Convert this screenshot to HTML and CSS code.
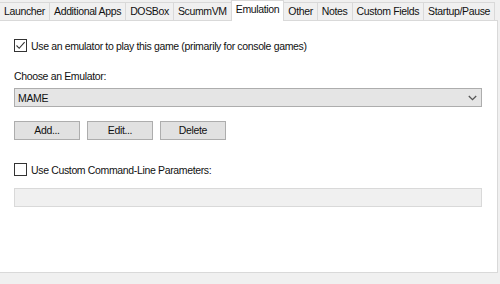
FILE: index.html
```html
<!DOCTYPE html>
<html>
<head>
<meta charset="utf-8">
<link rel="stylesheet" href="styles.css">
</head>
<body>
<div class="tabs">
  <div class="tab">Launcher</div>
  <div class="tab">Additional Apps</div>
  <div class="tab">DOSBox</div>
  <div class="tab">ScummVM</div>
  <div class="tab active">Emulation</div>
  <div class="tab">Other</div>
  <div class="tab">Notes</div>
  <div class="tab">Custom Fields</div>
  <div class="tab">Startup/Pause</div>
</div>
<div class="panel">
  <label class="check first">
    <span class="box"><svg width="11" height="11" viewBox="0 0 11 11"><path d="M1.5 5.5 L4.2 8.3 L9.6 2.2" fill="none" stroke="#333" stroke-width="1.1"/></svg></span>
    <span>Use an emulator to play this game (primarily for console games)</span>
  </label>
  <div class="label">Choose an Emulator:</div>
  <div class="select">
    <span>MAME</span>
    <svg class="chev" width="9" height="6" viewBox="0 0 9 6"><path d="M0.8 1 L4.5 4.6 L8.2 1" fill="none" stroke="#555" stroke-width="1.3"/></svg>
  </div>
  <div class="buttons">
    <div class="btn">Add...</div>
    <div class="btn">Edit...</div>
    <div class="btn">Delete</div>
  </div>
  <label class="check second">
    <span class="box"></span>
    <span>Use Custom Command-Line Parameters:</span>
  </label>
  <div class="input"></div>
</div>
</body>
</html>
```
FILE: styles.css
```css
html, body {
  margin: 0;
  padding: 0;
  background: #f0f0f0;
  font-family: "Liberation Sans", Arial, sans-serif;
  font-size: 10.5px;
  letter-spacing: -0.35px;
  color: #111;
  width: 500px;
  height: 284px;
  overflow: hidden;
}
.tabs {
  display: flex;
  align-items: flex-end;
  height: 20px;
}
.tab {
  height: 18px;
  box-sizing: border-box;
  border: 1px solid #d9d9d9;
  border-bottom: none;
  margin-left: -1px;
  padding: 0 4px;
  line-height: 17px;
  background: #f0f0f0;
  white-space: nowrap;
}
.tab:first-child { margin-left: 0; border-left: none; }
.tab.active {
  height: 21px;
  background: #fff;
  margin-bottom: -1px;
  position: relative;
  z-index: 1;
  padding-bottom: 4px;
}
.panel {
  box-sizing: border-box;
  width: 498px;
  height: 253px;
  background: #fff;
  border: 1px solid #d9d9d9;
  border-left: none;
  padding: 0 0 0 14px;
}
.check {
  display: flex;
  align-items: center;
  gap: 4px;
  height: 13px;
}
.check.first { margin-top: 18px; }
.check.second { margin-top: 23px; }
.box {
  width: 13px;
  height: 13px;
  box-sizing: border-box;
  border: 1px solid #333;
  background: #fff;
  display: flex;
  align-items: center;
  justify-content: center;
}
.label { margin-top: 17px; line-height: 14px; }
.select {
  margin-top: 5px;
  width: 468px;
  height: 19px;
  box-sizing: border-box;
  background: #e5e5e5;
  border: 1px solid #adadad;
  display: flex;
  align-items: center;
  justify-content: space-between;
  padding: 0 4px 0 3px;
}
.buttons {
  display: flex;
  gap: 7px;
  margin-top: 14px;
}
.btn {
  width: 66px;
  height: 19px;
  box-sizing: border-box;
  background: #e1e1e1;
  border: 1px solid #adadad;
  text-align: center;
  line-height: 17px;
}
.input {
  margin-top: 12px;
  width: 468px;
  height: 19px;
  box-sizing: border-box;
  background: #f0f0f0;
  border: 1px solid #d9d9d9;
}
```
